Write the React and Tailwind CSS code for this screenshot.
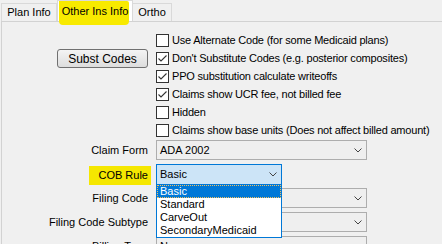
import { useState } from 'react';

const checks = [
  { label: 'Use Alternate Code (for some Medicaid plans)', on: false },
  { label: "Don't Substitute Codes (e.g. posterior composites)", on: true },
  { label: 'PPO substitution calculate writeoffs', on: true },
  { label: 'Claims show UCR fee, not billed fee', on: true },
  { label: 'Hidden', on: false },
  { label: 'Claims show base units (Does not affect billed amount)', on: false },
];

const cobOptions = ['Basic', 'Standard', 'CarveOut', 'SecondaryMedicaid'];

function Chevron() {
  return (
    <svg width="8" height="5" viewBox="0 0 8 5" className="shrink-0">
      <path d="M0.5 0.5 L4 4 L7.5 0.5" fill="none" stroke="#444" strokeWidth="1" />
    </svg>
  );
}

function CheckBox({ checked }) {
  return (
    <span className="w-[13px] h-[13px] border border-[#333] bg-white shrink-0 flex items-center justify-center">
      {checked && (
        <svg width="11" height="11" viewBox="0 0 11 11">
          <path d="M1.5 5.5 L4 8 L9.5 2.5" fill="none" stroke="#333" strokeWidth="1.1" />
        </svg>
      )}
    </span>
  );
}

function Combo({ value, width = 'w-[211px]' }) {
  return (
    <div className={`${width} h-[20px] border border-[#adadad] bg-[#efefef] flex items-center justify-between pl-[3px] pr-[4px]`}>
      <span>{value}</span>
      <Chevron />
    </div>
  );
}

function Row({ label, children, highlight }) {
  return (
    <div className="flex items-center h-[20px] mb-[4px]">
      <div className="w-[154px] flex justify-end pr-[8px]">
        {highlight ? (
          <span className="bg-[#f5e700] h-[19px] mt-[3px] pl-[9px] pr-[3px] -mr-[3px] flex items-center">{label}</span>
        ) : (
          <span>{label}</span>
        )}
      </div>
      {children}
    </div>
  );
}

export default function App() {
  const [cob] = useState('Basic');

  return (
    <div
      className="w-[442px] h-[244px] overflow-hidden bg-[#f0f0f0] text-[11px] text-black pl-[1px] flex flex-col"
      style={{ fontFamily: '"Liberation Sans", Arial, sans-serif' }}
    >
      {/* tab strip */}
      <div className="flex items-end h-[21px] relative z-10">
        <div className="h-[18px] w-[56px] border border-b-0 border-[#d9d9d9] flex items-center justify-center">
          Plan Info
        </div>
        <div className="h-[21px] w-[76px] border border-b-0 border-[#d9d9d9] bg-white relative flex items-center justify-center">
          <span className="absolute left-[1px] right-[3px] top-0 -bottom-[4px] bg-[#f8ea00] rounded-b-[4px] rounded-tr-[2px]" />
          <span className="relative">Other Ins Info</span>
        </div>
        <div className="h-[18px] w-[39px] border border-b-0 border-l-0 border-[#d9d9d9] flex items-center justify-center">
          Ortho
        </div>
      </div>

      {/* tab page */}
      <div className="flex-1 border-t border-l border-[#d2d2d2] pt-[9px]">
        <div className="flex">
          <div className="w-[154px] flex flex-col items-end pr-[8px] pt-[18px]">
            <button className="w-[91px] h-[19px] rounded-[3px] border border-[#707070] bg-gradient-to-b from-[#f4f4f4] to-[#dddddd] text-[12px] leading-none">
              Subst Codes
            </button>
          </div>
          <div className="flex flex-col">
            {checks.map((c) => (
              <div key={c.label} className="h-[18px] flex items-center gap-[3px] tracking-[-0.2px]">
                <CheckBox checked={c.on} />
                <span>{c.label}</span>
              </div>
            ))}
          </div>
        </div>

        <div className="mt-[1px]">
          <Row label="Claim Form">
            <Combo value="ADA 2002" />
          </Row>
          <Row label="COB Rule" highlight>
            <div className="relative">
              <div className="w-[126px] h-[21px] border border-[#0078d7] bg-[#cce4f7] flex items-center justify-between pl-[3px] pr-[4px]">
                <span>{cob}</span>
                <Chevron />
              </div>
              <div className="absolute left-0 top-[21px] w-[126px] border border-t-0 border-[#0078d7] bg-white z-20 leading-[13px]">
                {cobOptions.map((o) => (
                  <div
                    key={o}
                    className={
                      o === cob
                        ? 'h-[13px] px-[3px] bg-[#0078d7] text-white outline-1 outline-dotted outline-[#f0c060] -outline-offset-1'
                        : 'h-[13px] px-[3px]'
                    }
                  >
                    {o}
                  </div>
                ))}
              </div>
            </div>
          </Row>
          <Row label="Filing Code">
            <Combo value="" />
          </Row>
          <Row label="Filing Code Subtype">
            <Combo value="" />
          </Row>
          <Row label="Billing Type">
            <Combo value="None" />
          </Row>
        </div>
      </div>
    </div>
  );
}
